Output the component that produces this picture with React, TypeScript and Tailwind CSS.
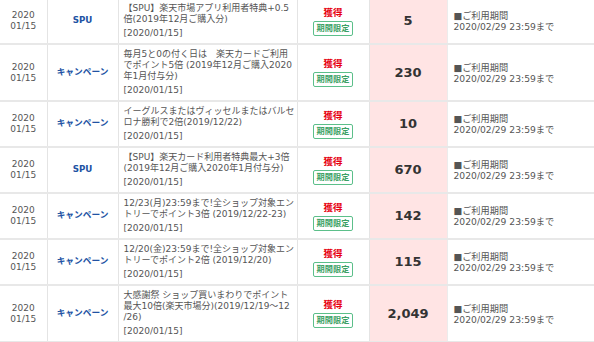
import React from "react"

interface Row {
    type: "SPU" | "キャンペーン"
    desc: string[]
    points: string
}

const rows: Row[] = [
    { type: "SPU", desc: ["【SPU】楽天市場アプリ利用者特典+0.5", "倍(2019年12月ご購入分)"], points: "5" },
    {
        type: "キャンペーン",
        desc: ["毎月5と0の付く日は　楽天カードご利用", "でポイント5倍 (2019年12月ご購入2020", "年1月付与分)"],
        points: "230",
    },
    { type: "キャンペーン", desc: ["イーグルスまたはヴィッセルまたはバルセ", "ロナ勝利で2倍(2019/12/22)"], points: "10" },
    { type: "SPU", desc: ["【SPU】楽天カード利用者特典最大+3倍", "(2019年12月ご購入2020年1月付与分)"], points: "670" },
    {
        type: "キャンペーン",
        desc: ["12/23(月)23:59まで!全ショップ対象エン", "トリーでポイント3倍 (2019/12/22-23)"],
        points: "142",
    },
    {
        type: "キャンペーン",
        desc: ["12/20(金)23:59まで!全ショップ対象エン", "トリーでポイント2倍 (2019/12/20)"],
        points: "115",
    },
    {
        type: "キャンペーン",
        desc: ["大感謝祭 ショップ買いまわりでポイント", "最大10倍(楽天市場分)(2019/12/19～12", "/26)"],
        points: "2,049",
    },
]

export default function App() {
    return (
        <div className="w-[594px] h-[342px] overflow-hidden bg-white font-['DejaVu_Sans','Noto_Sans_CJK_JP',sans-serif] text-[#555]">
            <table className="-mt-[1px] w-[594px] table-fixed border-collapse">
                <colgroup>
                    <col className="w-[47px]" />
                    <col className="w-[71px]" />
                    <col className="w-[179px]" />
                    <col className="w-[72px]" />
                    <col className="w-[78px]" />
                    <col className="w-[147px]" />
                </colgroup>
                <tbody>
                    {rows.map((row, i) => (
                        <tr key={i} className="border-b-2 border-[#e8e8e8]">
                            {/* date */}
                            <td className="border-r border-[#e4e4e4] text-center text-[9px]">
                                <div className="h-[11px] leading-[11px]">2020</div>
                                <div className="h-[11px] leading-[11px]">01/15</div>
                            </td>
                            {/* type */}
                            <td className="border-r border-[#e4e4e4] text-center text-[8.7px] font-bold text-[#2152a3]">
                                {row.type}
                            </td>
                            {/* description */}
                            <td className="border-r border-[#e4e4e4] px-[5px] py-[4px] text-[9px] whitespace-nowrap">
                                {row.desc.map((line, j) => (
                                    <div key={j} className="h-[11px] leading-[11px]">
                                        {line}
                                    </div>
                                ))}
                                <div className="mt-[3px] h-[11px] leading-[11px]">[2020/01/15]</div>
                            </td>
                            {/* status */}
                            <td className="border-r border-[#e4e4e4] text-center">
                                <div className="flex flex-col items-center gap-[2px]">
                                    <span className="h-[12px] text-[9.5px] font-bold leading-[12px] text-[#e60012]">獲得</span>
                                    <span className="h-[15px] rounded-[2px] border border-[#5cbf8a] px-[3px] text-[8.2px] font-bold leading-[13px] text-[#3a9f63]">
                                        期間限定
                                    </span>
                                </div>
                            </td>
                            {/* points */}
                            <td className="border-r border-[#ececec] bg-[#ffe4e4] text-center text-[13px] font-bold text-[#333]">
                                {row.points}
                            </td>
                            {/* limit */}
                            <td className="px-[6px] text-[9.2px]">
                                <div className="h-[11px] leading-[11px]">■ご利用期間</div>
                                <div className="h-[11px] leading-[11px]">2020/02/29 23:59まで</div>
                            </td>
                        </tr>
                    ))}
                </tbody>
            </table>
        </div>
    )
}
